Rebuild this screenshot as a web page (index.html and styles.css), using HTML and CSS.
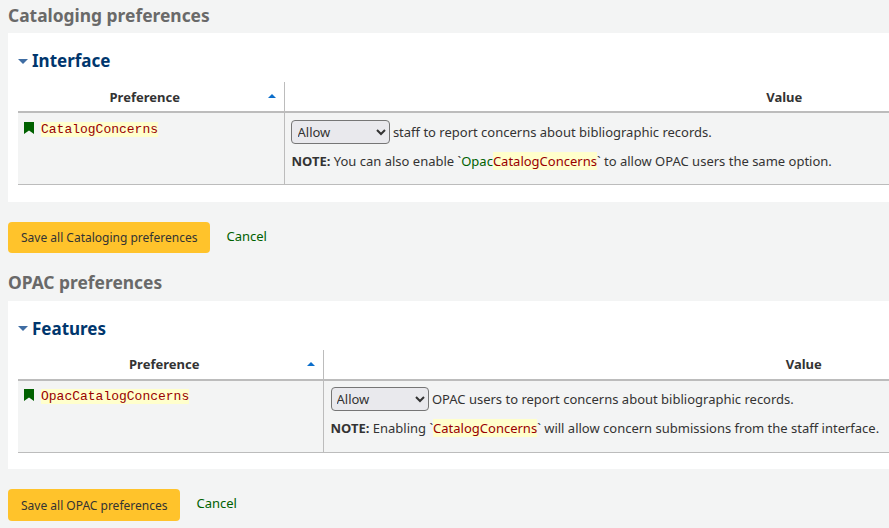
FILE: index.html
```html
<!DOCTYPE html>
<html lang="en">
<head>
<meta charset="utf-8">
<title>Preferences</title>
<link rel="stylesheet" href="styles.css">
</head>
<body>
<section class="group">
  <h2 class="group-title">Cataloging preferences</h2>
  <div class="panel">
    <h3 class="panel-title"><span class="caret"></span>Interface</h3>
    <table class="prefs">
      <colgroup><col class="col-a"><col></colgroup>
      <thead>
        <tr><th class="sort">Preference<span class="sort-arrow"></span></th><th>Value</th></tr>
      </thead>
      <tbody>
        <tr>
          <td class="name-cell">
            <svg class="mark" width="10" height="12" viewBox="0 0 10 12"><path d="M0 0H10V12L5 8.5L0 12Z" fill="#006100"/></svg><code class="hl">CatalogConcerns</code>
          </td>
          <td>
            <div class="line"><select class="pick"><option>Allow</option></select> staff to report concerns about bibliographic records.</div>
            <p class="note"><strong>NOTE:</strong> You can also enable `<a class="link">Opac<span class="hl">CatalogConcerns</span></a>` to allow OPAC users the same option.</p>
          </td>
        </tr>
      </tbody>
    </table>
  </div>
  <div class="actions"><button class="save">Save all Cataloging preferences</button><a class="cancel">Cancel</a></div>
</section>
<section class="group group-alt">
  <h2 class="group-title">OPAC preferences</h2>
  <div class="panel">
    <h3 class="panel-title"><span class="caret"></span>Features</h3>
    <table class="prefs">
      <colgroup><col class="col-b"><col></colgroup>
      <thead>
        <tr><th class="sort">Preference<span class="sort-arrow"></span></th><th>Value</th></tr>
      </thead>
      <tbody>
        <tr>
          <td class="name-cell">
            <svg class="mark" width="10" height="12" viewBox="0 0 10 12"><path d="M0 0H10V12L5 8.5L0 12Z" fill="#006100"/></svg><code class="hl">OpacCatalogConcerns</code>
          </td>
          <td>
            <div class="line"><select class="pick"><option>Allow</option></select> OPAC users to report concerns about bibliographic records.</div>
            <p class="note"><strong>NOTE:</strong> Enabling `<a class="link"><span class="hl">CatalogConcerns</span></a>` will allow concern submissions from the staff interface.</p>
          </td>
        </tr>
      </tbody>
    </table>
  </div>
  <div class="actions"><button class="save">Save all OPAC preferences</button><a class="cancel">Cancel</a></div>
</section>
</body>
</html>
```
FILE: styles.css
```css
html, body { margin: 0; padding: 0; height: 528px; overflow: hidden; }
body {
  background: #f3f4f4;
  color: #333;
  font-family: "Noto Sans", sans-serif;
  font-size: 13px;
  line-height: 18px;
  width: 889px;
}
.group { padding-left: 8px; }
.group-title {
  margin: 0;
  height: 33px;
  padding-top: 3px;
  box-sizing: border-box;
  font-size: 17.4px;
  line-height: 25px;
  font-weight: 700;
  color: #696969;
}
.panel {
  background: #fff;
  width: 1300px;
  padding: 16px 10px 17px;
  box-sizing: border-box;
}
.panel-title {
  margin: 0 0 9px;
  height: 24px;
  font-size: 17px;
  line-height: 24px;
  font-weight: 700;
  color: #00366d;
  display: flex;
  align-items: center;
}
.caret {
  width: 0; height: 0;
  margin-right: 4px;
  border-left: 5px solid transparent;
  border-right: 5px solid transparent;
  border-top: 5px solid #3f6da3;
}
.prefs { width: 1267px; border-collapse: collapse; table-layout: fixed; }
.col-a { width: 266px; }
.col-b { width: 305px; }
.prefs th {
  height: 29px;
  padding: 0;
  border-right: 1px solid #bcbcbc;
  border-bottom: 2px solid #bcbcbc;
  background: #fff;
  color: #333;
  font-weight: 700;
  font-size: 13px;
  text-align: center;
  position: relative;
}
.prefs th.sort { padding-right: 12px; }
.sort-arrow {
  position: absolute;
  right: 8px;
  top: 12px;
  width: 0; height: 0;
  border-left: 4px solid transparent;
  border-right: 4px solid transparent;
  border-bottom: 4px solid #0b6ecb;
}
.prefs td {
  background: #f3f4f4;
  border-right: 1px solid #bcbcbc;
  border-bottom: 1px solid #bcbcbc;
  padding: 7px 7px 0;
  vertical-align: top;
  height: 72px;
  box-sizing: border-box;
}
.prefs td.name-cell { white-space: nowrap; padding: 6px 6px 0; }
.mark { vertical-align: -1px; margin-right: 7px; }
.hl { background: #ffffcc; color: #990000; }
code.hl { font-family: "Liberation Mono", monospace; font-size: 13px; }
.line { display: flex; align-items: center; height: 24px; white-space: pre; }
.pick {
  width: 99px; height: 24px;
  margin-left: -1px;
  border: 1px solid #767676;
  border-radius: 4px;
  background: #e9e9ed;
  color: #333;
  font-family: "Noto Sans", sans-serif;
  font-size: 13px;
  padding: 0 0 0 2px;
  box-sizing: border-box;
}
.note { margin: 8px 0 0; line-height: 18px; white-space: nowrap; }
.link { color: #006100; }
.link .hl { color: #990000; }
.actions { display: flex; height: 66px; padding-top: 20px; box-sizing: border-box; }
.save {
  height: 31px;
  padding: 0 13px;
  border: 0;
  border-radius: 4px;
  background: #ffc32b;
  color: #333;
  font-family: "Noto Sans", sans-serif;
  font-size: 12px;
}
.cancel { margin-left: 16px; color: #006100; line-height: 29px; font-size: 13px; }
.group-alt .group-title { padding-top: 2px; }
.group-alt .panel { padding-bottom: 16px; }
.group-alt .prefs th { height: 28px; padding-bottom: 1px; }
.group-alt .prefs td { padding-top: 6px; height: 73px; }
.group-alt .prefs td.name-cell { padding-top: 5px; }
.group-alt .pick { width: 98px; margin-left: 0; padding-left: 1px; }
.group-alt .save { height: 32px; }
```
